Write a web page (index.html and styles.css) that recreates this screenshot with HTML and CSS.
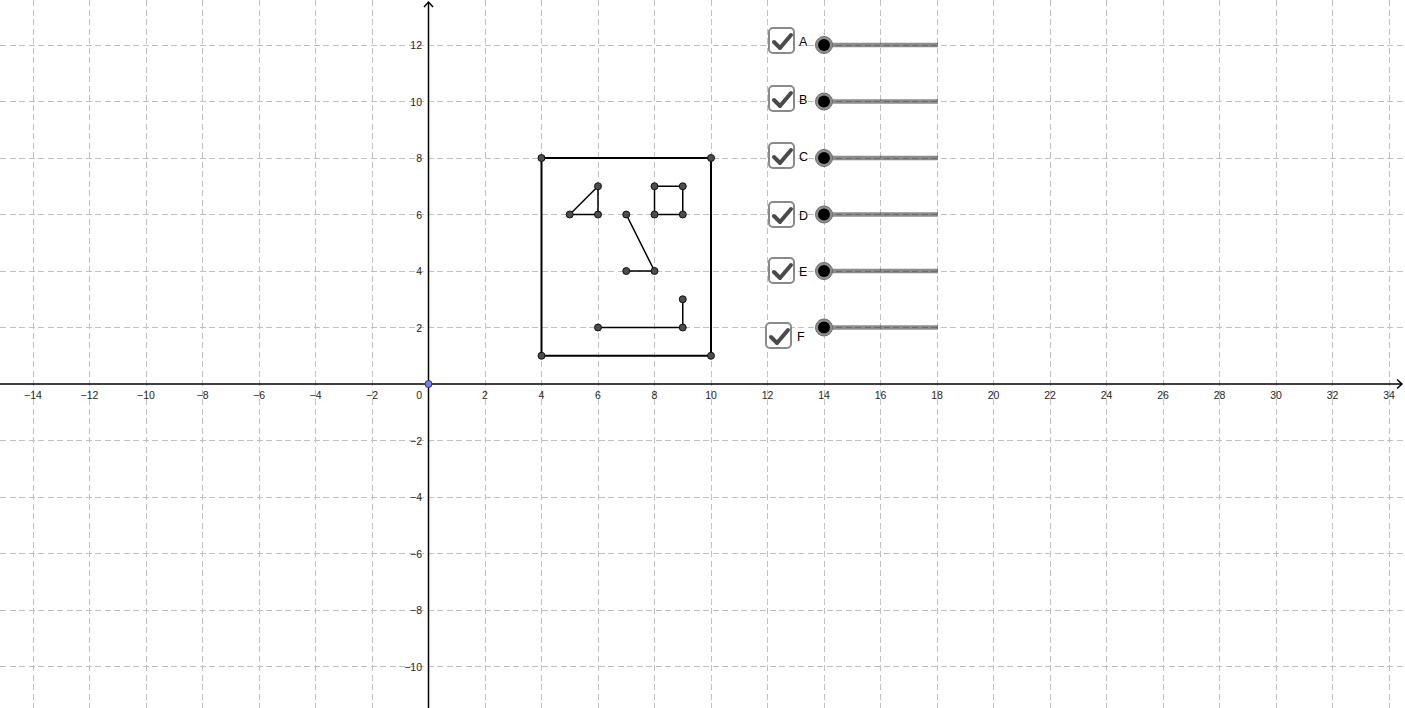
FILE: index.html
```html
<!DOCTYPE html>
<html lang="en">
<head>
<meta charset="utf-8">
<title>Graphics</title>
<link rel="stylesheet" href="styles.css">
</head>
<body>
<svg class="board" width="1405" height="708" viewBox="0 0 1405 708" xmlns="http://www.w3.org/2000/svg">
  <g class="grid">
    <line x1="33" y1="0" x2="33" y2="708"/>
    <line x1="89.5" y1="0" x2="89.5" y2="708"/>
    <line x1="146" y1="0" x2="146" y2="708"/>
    <line x1="202.5" y1="0" x2="202.5" y2="708"/>
    <line x1="259" y1="0" x2="259" y2="708"/>
    <line x1="315.5" y1="0" x2="315.5" y2="708"/>
    <line x1="372" y1="0" x2="372" y2="708"/>
    <line x1="485" y1="0" x2="485" y2="708"/>
    <line x1="541.5" y1="0" x2="541.5" y2="708"/>
    <line x1="598" y1="0" x2="598" y2="708"/>
    <line x1="654.5" y1="0" x2="654.5" y2="708"/>
    <line x1="711" y1="0" x2="711" y2="708"/>
    <line x1="767.5" y1="0" x2="767.5" y2="708"/>
    <line x1="824" y1="0" x2="824" y2="708"/>
    <line x1="880.5" y1="0" x2="880.5" y2="708"/>
    <line x1="937" y1="0" x2="937" y2="708"/>
    <line x1="993.5" y1="0" x2="993.5" y2="708"/>
    <line x1="1050" y1="0" x2="1050" y2="708"/>
    <line x1="1106.5" y1="0" x2="1106.5" y2="708"/>
    <line x1="1163" y1="0" x2="1163" y2="708"/>
    <line x1="1219.5" y1="0" x2="1219.5" y2="708"/>
    <line x1="1276" y1="0" x2="1276" y2="708"/>
    <line x1="1332.5" y1="0" x2="1332.5" y2="708"/>
    <line x1="1389" y1="0" x2="1389" y2="708"/>

    <line x1="0" y1="45" x2="1405" y2="45"/>
    <line x1="0" y1="101.5" x2="1405" y2="101.5"/>
    <line x1="0" y1="158" x2="1405" y2="158"/>
    <line x1="0" y1="214.5" x2="1405" y2="214.5"/>
    <line x1="0" y1="271" x2="1405" y2="271"/>
    <line x1="0" y1="327.5" x2="1405" y2="327.5"/>
    <line x1="0" y1="440.5" x2="1405" y2="440.5"/>
    <line x1="0" y1="497" x2="1405" y2="497"/>
    <line x1="0" y1="553.5" x2="1405" y2="553.5"/>
    <line x1="0" y1="610" x2="1405" y2="610"/>
    <line x1="0" y1="666.5" x2="1405" y2="666.5"/>
  </g>

  <g class="axis">
    <line x1="0" y1="384" x2="1402" y2="384"/>
    <polyline points="1397,379.5 1402,384 1397,388.5"/>
    <line x1="428.5" y1="708" x2="428.5" y2="2"/>
    <polyline points="424,7 428.5,2 433,7"/>
  </g>

  <g class="xlabels">
    <text x="33" y="399">−14</text>
    <text x="89.5" y="399">−12</text>
    <text x="146" y="399">−10</text>
    <text x="202.5" y="399">−8</text>
    <text x="259" y="399">−6</text>
    <text x="315.5" y="399">−4</text>
    <text x="372" y="399">−2</text>
    <text x="485" y="399">2</text>
    <text x="541.5" y="399">4</text>
    <text x="598" y="399">6</text>
    <text x="654.5" y="399">8</text>
    <text x="711" y="399">10</text>
    <text x="767.5" y="399">12</text>
    <text x="824" y="399">14</text>
    <text x="880.5" y="399">16</text>
    <text x="937" y="399">18</text>
    <text x="993.5" y="399">20</text>
    <text x="1050" y="399">22</text>
    <text x="1106.5" y="399">24</text>
    <text x="1163" y="399">26</text>
    <text x="1219.5" y="399">28</text>
    <text x="1276" y="399">30</text>
    <text x="1332.5" y="399">32</text>
    <text x="1389" y="399">34</text>
  </g>
  <g class="ylabels">
    <text x="422" y="399">0</text>
    <text x="422" y="49">12</text>
    <text x="422" y="105.5">10</text>
    <text x="422" y="162">8</text>
    <text x="422" y="218.5">6</text>
    <text x="422" y="275">4</text>
    <text x="422" y="331.5">2</text>
    <text x="422" y="444.5">−2</text>
    <text x="422" y="501">−4</text>
    <text x="422" y="557.5">−6</text>
    <text x="422" y="614">−8</text>
    <text x="422" y="670.5">−10</text>
  </g>

  <g class="seg-bold">
    <polygon points="541.5,355.75 711,355.75 711,158 541.5,158"/>
  </g>
  <g class="seg">
    <polygon points="569.75,214.5 598,214.5 598,186.25"/>
    <polygon points="654.5,214.5 682.75,214.5 682.75,186.25 654.5,186.25"/>
    <polyline points="626.25,214.5 654.5,271 626.25,271"/>
    <polyline points="598,327.5 682.75,327.5 682.75,299.25"/>
  </g>
  <g class="pt">
    <circle cx="541.5" cy="355.75" r="3.5"/>
    <circle cx="711" cy="355.75" r="3.5"/>
    <circle cx="711" cy="158" r="3.5"/>
    <circle cx="541.5" cy="158" r="3.5"/>
    <circle cx="569.75" cy="214.5" r="3.5"/>
    <circle cx="598" cy="214.5" r="3.5"/>
    <circle cx="598" cy="186.25" r="3.5"/>
    <circle cx="654.5" cy="214.5" r="3.5"/>
    <circle cx="682.75" cy="214.5" r="3.5"/>
    <circle cx="682.75" cy="186.25" r="3.5"/>
    <circle cx="654.5" cy="186.25" r="3.5"/>
    <circle cx="626.25" cy="214.5" r="3.5"/>
    <circle cx="654.5" cy="271" r="3.5"/>
    <circle cx="626.25" cy="271" r="3.5"/>
    <circle cx="598" cy="327.5" r="3.5"/>
    <circle cx="682.75" cy="327.5" r="3.5"/>
    <circle cx="682.75" cy="299.25" r="3.5"/>
  </g>
  <circle class="origin" cx="428.5" cy="384" r="3.5"/>

  <g class="sliders">
    <line class="track" x1="824" y1="45" x2="938" y2="45"/>
    <line class="track" x1="824" y1="101.5" x2="938" y2="101.5"/>
    <line class="track" x1="824" y1="158" x2="938" y2="158"/>
    <line class="track" x1="824" y1="214.5" x2="938" y2="214.5"/>
    <line class="track" x1="824" y1="271" x2="938" y2="271"/>
    <line class="track" x1="824" y1="327.5" x2="938" y2="327.5"/>
    <circle class="knob-ring" cx="824" cy="45" r="8.5"/>
    <circle class="knob-ring" cx="824" cy="101.5" r="8.5"/>
    <circle class="knob-ring" cx="824" cy="158" r="8.5"/>
    <circle class="knob-ring" cx="824" cy="214.5" r="8.5"/>
    <circle class="knob-ring" cx="824" cy="271" r="8.5"/>
    <circle class="knob-ring" cx="824" cy="327.5" r="8.5"/>
    <circle class="knob" cx="824" cy="45" r="6"/>
    <circle class="knob" cx="824" cy="101.5" r="6"/>
    <circle class="knob" cx="824" cy="158" r="6"/>
    <circle class="knob" cx="824" cy="214.5" r="6"/>
    <circle class="knob" cx="824" cy="271" r="6"/>
    <circle class="knob" cx="824" cy="327.5" r="6"/>
  </g>

  <g class="checkbox" transform="translate(768,27)">
    <rect class="cb-box" x="1" y="1" width="25" height="25" rx="4"/>
    <polyline class="cb-tick" points="6,15 12,21 23,8"/>
    <text class="cb-label" x="31" y="18.5">A</text>
  </g>
  <g class="checkbox" transform="translate(768,85)">
    <rect class="cb-box" x="1" y="1" width="25" height="25" rx="4"/>
    <polyline class="cb-tick" points="6,15 12,21 23,8"/>
    <text class="cb-label" x="31" y="18.5">B</text>
  </g>
  <g class="checkbox" transform="translate(768,142)">
    <rect class="cb-box" x="1" y="1" width="25" height="25" rx="4"/>
    <polyline class="cb-tick" points="6,15 12,21 23,8"/>
    <text class="cb-label" x="31" y="18.5">C</text>
  </g>
  <g class="checkbox" transform="translate(768,201)">
    <rect class="cb-box" x="1" y="1" width="25" height="25" rx="4"/>
    <polyline class="cb-tick" points="6,15 12,21 23,8"/>
    <text class="cb-label" x="31" y="18.5">D</text>
  </g>
  <g class="checkbox" transform="translate(768,257)">
    <rect class="cb-box" x="1" y="1" width="25" height="25" rx="4"/>
    <polyline class="cb-tick" points="6,15 12,21 23,8"/>
    <text class="cb-label" x="31" y="18.5">E</text>
  </g>
  <g class="checkbox" transform="translate(765,322)">
    <rect class="cb-box" x="1" y="1" width="25" height="25" rx="4"/>
    <polyline class="cb-tick" points="6,15 12,21 23,8"/>
    <text class="cb-label" x="32" y="18.5">F</text>
  </g>
</svg>
</body>
</html>
```
FILE: styles.css
```css
html, body {
  margin: 0;
  padding: 0;
  background: #ffffff;
  overflow: hidden;
}

.board {
  display: block;
  width: 1405px;
  height: 708px;
}

.grid line {
  stroke: #c0c0c0;
  stroke-width: 1;
  stroke-dasharray: 6 3.5;
  shape-rendering: crispEdges;
}

.axis line,
.axis polyline {
  stroke: #000000;
  stroke-width: 1.5;
  fill: none;
}

.xlabels text,
.ylabels text {
  font-family: "Liberation Sans", Arial, sans-serif;
  font-size: 10.5px;
  fill: #262626;
}

.xlabels text {
  text-anchor: middle;
}

.ylabels text {
  text-anchor: end;
}

.seg-bold polygon {
  fill: none;
  stroke: #000000;
  stroke-width: 2;
}

.seg polygon,
.seg polyline {
  fill: none;
  stroke: #000000;
  stroke-width: 1.5;
}

.pt circle {
  fill: #4d4d4d;
  stroke: #111111;
  stroke-width: 1;
}

.origin {
  fill: #7a7aff;
  stroke: #33336e;
  stroke-width: 1;
}

.track {
  stroke: #000000;
  stroke-opacity: 0.45;
  stroke-width: 4.5;
}

.knob-ring {
  fill: #8f8f8f;
  stroke: #6a6a6a;
  stroke-width: 1;
}

.knob {
  fill: #000000;
}

.cb-box {
  fill: #ffffff;
  stroke: #8a8a8a;
  stroke-width: 2;
}

.cb-tick {
  fill: none;
  stroke: #4a4a4a;
  stroke-width: 4;
  stroke-linecap: round;
  stroke-linejoin: round;
}

.cb-label {
  font-family: "Liberation Sans", Arial, sans-serif;
  font-size: 12.5px;
  fill: #000000;
}
```
